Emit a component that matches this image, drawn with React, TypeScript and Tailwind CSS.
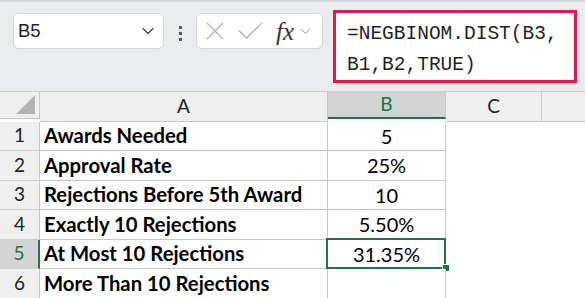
import { ChevronDown } from "lucide-react";

const rows = [
  { n: 1, a: "Awards Needed", b: "5", h: "h-[29px]" },
  { n: 2, a: "Approval Rate", b: "25%", h: "h-[30px]" },
  { n: 3, a: "Rejections Before 5th Award", b: "10", h: "h-[29px]" },
  { n: 4, a: "Exactly 10 Rejections", b: "5.50%", h: "h-[30px]" },
  { n: 5, a: "At Most 10 Rejections", b: "31.35%", h: "h-[29px]" },
  { n: 6, a: "More Than 10 Rejections", b: "", h: "h-[30px]" },
];

function FormulaBar() {
  return (
    <div className="h-[91px] bg-[#e9ecef]">
      <div className="h-[3px] bg-gradient-to-b from-[#cdd1d5] to-[#e9ecef]" />
      <div className="flex items-start">
        <div className="ml-[13px] mt-[10px] flex h-[36px] w-[151px] items-center justify-between rounded-[6px] border border-[#d3d6da] bg-white pl-[4px] pr-[5px]">
          <span className="font-['Liberation_Sans',sans-serif] text-[18.5px] text-[#1f1f1f]">B5</span>
          <ChevronDown className="h-[20px] w-[20px] text-[#444]" strokeWidth={1.5} />
        </div>
        <div className="mt-[23px] flex w-[32px] flex-col items-center gap-[3px]">
          <span className="h-[3px] w-[3px] bg-[#555]" />
          <span className="h-[3px] w-[3px] bg-[#555]" />
          <span className="h-[3px] w-[3px] bg-[#555]" />
        </div>
        <div className="mt-[10px] flex h-[36px] w-[127px] items-center rounded-[6px] border border-[#d3d6da] bg-white pl-[9px]">
          <svg width="18" height="18" viewBox="0 0 18 18" fill="none" stroke="#b4b4b4" strokeWidth="1.4">
            <path d="M1 1 17 17M17 1 1 17" />
          </svg>
          <svg className="ml-[14px]" width="25" height="18" viewBox="0 0 25 18" fill="none" stroke="#b4b4b4" strokeWidth="1.4">
            <path d="M1 8.5 8.5 16 24 1" />
          </svg>
          <span className="ml-[13px] font-['Liberation_Serif',serif] text-[25px] italic leading-none text-[#333]">
            fx
          </span>
          <ChevronDown className="ml-[3px] h-[17px] w-[17px] text-[#999]" strokeWidth={1.4} />
        </div>
        <div className="ml-[10px] mt-[7px] h-[73px] w-[244px] border-[3px] border-[#e01a4f] bg-white pl-[11px] pt-[6px] font-['Liberation_Mono',monospace] text-[19.5px] leading-[31px] text-[#1f1f1f]">
          =NEGBINOM.DIST(B3,
          <br />
          B1,B2,TRUE)
        </div>
      </div>
    </div>
  );
}

function Sheet() {
  const head = "flex items-center justify-center border-r border-b border-[#c8c8c8] bg-[#efefef] text-[19px] text-[#222]";
  return (
    <div className="grid grid-cols-[40px_288px_118px_96px_1fr] font-['Lato',sans-serif]">
      <div className={`${head} relative h-[28px] border-t border-t-[#d5d5d5]`}>
        <svg className="absolute right-[4px] bottom-[4px]" width="19" height="19" viewBox="0 0 19 19">
          <polygon points="19,0 19,19 0,19" fill="#b4b4b4" />
        </svg>
      </div>
      <div className={`${head} border-t border-t-[#d5d5d5]`}>A</div>
      <div className="flex h-[28px] items-center justify-center border-t border-t-[#d5d5d5] border-r border-r-[#c8c8c8] border-b-2 border-b-[#217346] bg-[#d3d3d3] text-[19px] text-[#217346]">
        B
      </div>
      <div className={`${head} border-t border-t-[#d5d5d5]`}>C</div>
      <div className={`${head} border-t border-t-[#d5d5d5] border-r-0`} />

      {rows.map((r) => {
        const sel = r.n === 5;
        return (
          <div key={r.n} className="contents">
            <div
              className={`${r.h} flex items-center justify-center border-b border-[#d0d0d0] text-[19px] ${
                sel
                  ? "border-r-2 border-r-[#217346] bg-[#d3d3d3] text-[#217346]"
                  : "border-r border-r-[#c8c8c8] bg-[#efefef] text-[#222]"
              }`}
            >
              {r.n}
            </div>
            <div className={`${r.h} flex items-center border-r border-b border-[#c4c4c4] bg-white pl-[4px] text-[20.3px] font-bold text-black`}>
              {r.a}
            </div>
            <div className={`${r.h} relative flex items-center justify-center border-r border-b border-[#c4c4c4] bg-white text-[20px] text-black`}>
              {r.b}
              {sel && (
                <>
                  <div className="absolute -left-[2px] -top-[2px] -right-[1px] -bottom-[1px] border-2 border-[#217346]" />
                  <div className="absolute -right-[5px] -bottom-[4px] h-[8px] w-[8px] border border-white bg-[#217346]" />
                </>
              )}
            </div>
            <div className={`${r.h} bg-white`} />
            <div className={`${r.h} bg-white`} />
          </div>
        );
      })}
    </div>
  );
}

export default function App() {
  return (
    <div className="h-[298px] w-[585px] overflow-hidden bg-white">
      <FormulaBar />
      <Sheet />
    </div>
  );
}
